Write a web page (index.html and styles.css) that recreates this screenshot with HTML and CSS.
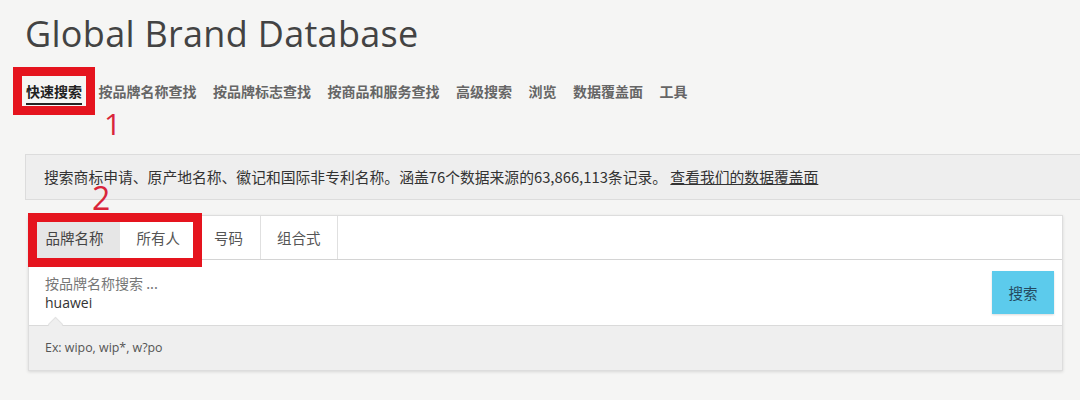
FILE: index.html
```html
<!DOCTYPE html>
<html lang="zh-CN">
<head>
<meta charset="utf-8">
<title>Global Brand Database</title>
<link rel="stylesheet" href="styles.css">
</head>
<body>
<div class="page">
  <h1 class="title">Global Brand Database</h1>
  <nav class="nav">
    <a class="nav-item active">快速搜索</a>
    <a class="nav-item">按品牌名称查找</a>
    <a class="nav-item">按品牌标志查找</a>
    <a class="nav-item">按商品和服务查找</a>
    <a class="nav-item">高级搜索</a>
    <a class="nav-item">浏览</a>
    <a class="nav-item">数据覆盖面</a>
    <a class="nav-item">工具</a>
  </nav>
  <div class="info">搜索商标申请、原产地名称、徽记和国际非专利名称。涵盖76个数据来源的63,866,113条记录。 <a class="info-link">查看我们的数据覆盖面</a></div>
  <div class="panel">
    <div class="tabs">
      <div class="tab selected">品牌名称</div>
      <div class="tab">所有人</div>
      <div class="tab">号码</div>
      <div class="tab">组合式</div>
    </div>
    <div class="query">
      <div class="field">
        <div class="field-label">按品牌名称搜索 ...</div>
        <div class="field-value">huawei</div>
      </div>
      <button class="search-btn">搜索</button>
    </div>
    <div class="hint">
      <span class="notch"></span>
      Ex: wipo, wip*, w?po
    </div>
  </div>
  <div class="mark mark-1"></div>
  <div class="mark-num num-1">1</div>
  <div class="mark mark-2"></div>
  <div class="mark-num num-2">2</div>
</div>
</body>
</html>
```
FILE: styles.css
```css
html, body {
  margin: 0;
  padding: 0;
  background: #f5f5f4;
  overflow: hidden;
}
.page {
  position: relative;
  width: 1080px;
  height: 400px;
  overflow: hidden;
  font-family: "Open Sans", "Noto Sans CJK SC", sans-serif;
  color: #333;
}
.title {
  margin: 0;
  padding: 10px 0 0 25px;
  font-family: "Open Sans", sans-serif;
  font-weight: 400;
  font-size: 36px;
  line-height: 48px;
  letter-spacing: 0.3px;
  color: #434343;
}
.nav {
  display: flex;
  gap: 16.5px;
  margin: 12px 0 0 26px;
  height: 42px;
}
.nav-item {
  font-family: "Noto Sans CJK SC", sans-serif;
  font-weight: 700;
  font-size: 14px;
  line-height: 20px;
  padding-top: 11px;
  color: #666;
  height: 22px;
}
.nav-item.active {
  color: #222;
  border-bottom: 2px solid #222;
}
.info {
  margin: 42px 0 0 25px;
  width: 1100px;
  height: 44px;
  background: #eeeeee;
  border: 1px solid #dcdcdc;
  padding-left: 18px;
  font-family: "Noto Sans CJK SC", sans-serif;
  font-size: 14.8px;
  line-height: 44px;
  color: #333;
}
.info-link {
  text-decoration: underline;
  color: #333;
}
.panel {
  margin: 15px 0 0 28px;
  width: 1033px;
  background: #fff;
  border: 1px solid #dddddd;
  box-shadow: 0 1px 3px rgba(0,0,0,0.12);
}
.tabs {
  display: flex;
  height: 43px;
  border-bottom: 1px solid #d4d4d4;
}
.tab {
  padding: 0 16.5px;
  font-family: "Noto Sans CJK SC", sans-serif;
  font-size: 14.5px;
  line-height: 43px;
  color: #555;
  border-right: 1px solid #e0e0e0;
}
.tab.selected {
  background: #e6e6e6;
  border-right: none;
  color: #444;
}
.query {
  display: flex;
  align-items: center;
  justify-content: space-between;
  height: 65px;
  padding: 0 8px 0 16px;
}
.field-label {
  font-family: "Noto Sans CJK SC", sans-serif;
  font-size: 14px;
  line-height: 20px;
  color: #777;
}
.field-value {
  font-family: "Open Sans", sans-serif;
  font-size: 14px;
  line-height: 20px;
  color: #333;
}
.search-btn {
  width: 62px;
  height: 43px;
  border: none;
  background: #5ccbec;
  color: #244a60;
  font-family: "Noto Sans CJK SC", sans-serif;
  font-size: 14.5px;
  box-shadow: 0 1px 2px rgba(0,0,0,0.15);
  padding: 0;
}
.hint {
  position: relative;
  height: 44px;
  background: #efefef;
  border-top: 1px solid #dadada;
  padding-left: 16px;
  font-family: "Open Sans", sans-serif;
  font-size: 12.4px;
  line-height: 44px;
  color: #555;
}
.notch {
  position: absolute;
  left: 21px;
  top: -7px;
  width: 10px;
  height: 10px;
  background: #efefef;
  border-left: 1px solid #e2e2e2;
  border-top: 1px solid #e2e2e2;
  transform: rotate(45deg);
}
.mark {
  position: absolute;
  box-sizing: border-box;
  border: 9px solid #e5141e;
}
.mark-1 {
  left: 13px;
  top: 67px;
  width: 82px;
  height: 48px;
}
.mark-2 {
  left: 28px;
  top: 213px;
  width: 174px;
  height: 54px;
}
.mark-num {
  position: absolute;
  font-family: "Open Sans", sans-serif;
  font-weight: 400;
  color: #d9253a;
  line-height: 1;
}
.num-1 {
  left: 104px;
  top: 109px;
  font-size: 30px;
}
.num-2 {
  left: 92px;
  top: 182px;
  font-size: 32px;
}
```
